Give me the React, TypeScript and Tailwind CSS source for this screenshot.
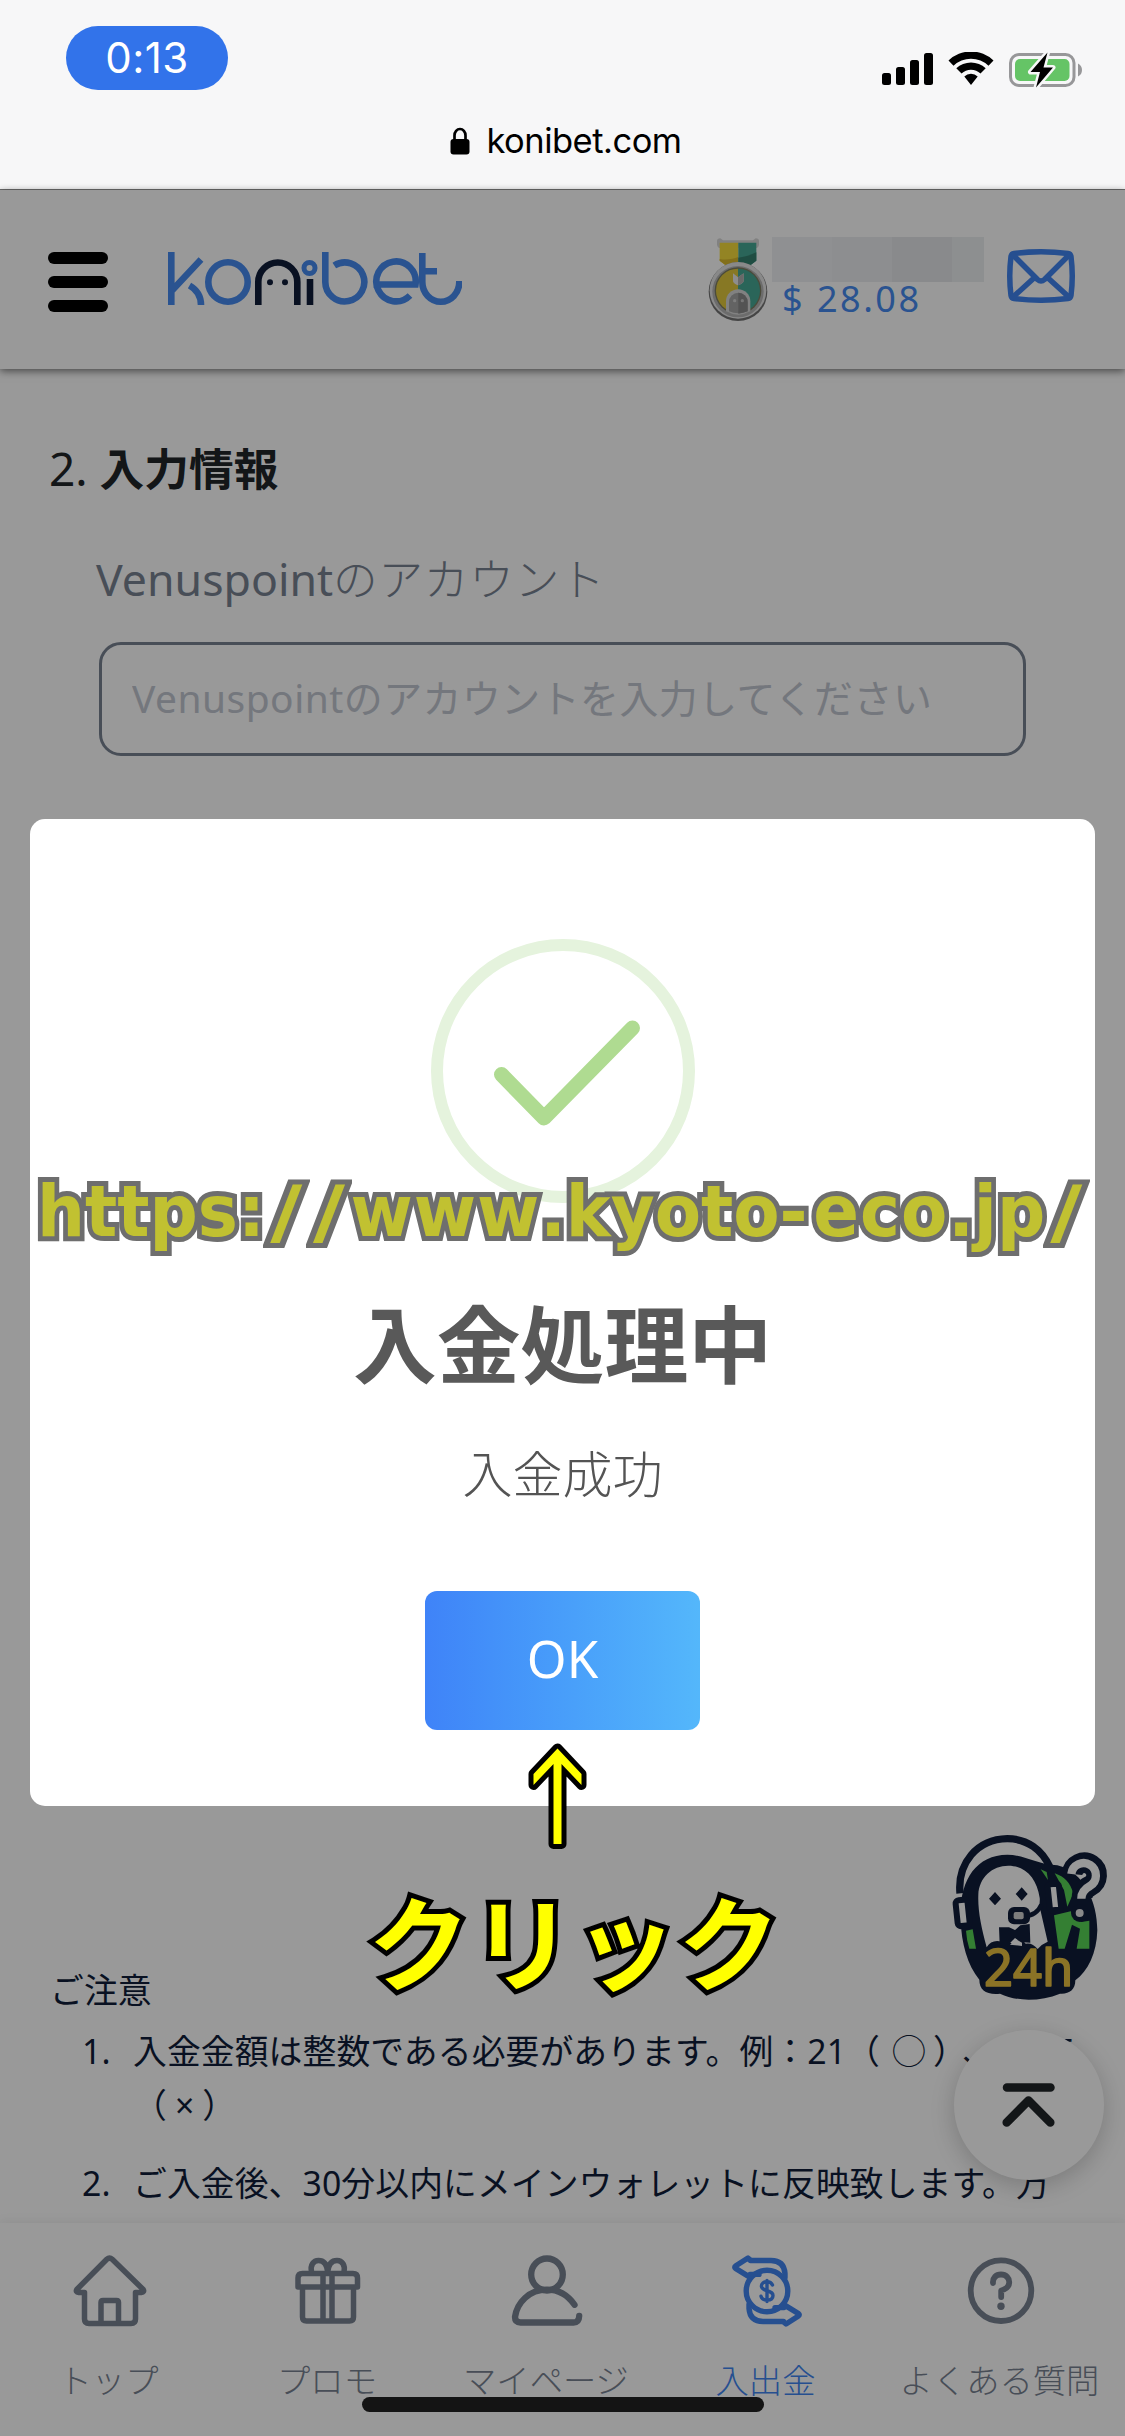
// App.tsx
import React from 'react';

const Logo: React.FC = () => (
  <svg width="294" height="53" viewBox="168 252 294 53" fill="none" stroke="#468bf0" strokeWidth="6.6">
    <path d="M171.3 252v53M172 290.5l29-31M189.5 285.5c7 4 11.500 10 11.500 19.500" />
    <circle cx="228" cy="282" r="19.700" />
    <path d="M258.300 305v-23a19.500 19.500 0 0 1 39 0v23M310 279v26" stroke="#101d3a" />
    <circle cx="270" cy="282.300" r="3" fill="#101d3a" stroke="none" />
    <circle cx="285" cy="282.300" r="3" fill="#101d3a" stroke="none" />
    <circle cx="309.500" cy="268" r="5.500" strokeWidth="5" />
    <path d="M325.300 252v30a19.500 19.500 0 1 0 9-16.500" />
    <path d="M373.500 284.500h42a19.700 20 0 1 0-5.500 11" />
    <path d="M422.300 253v29a18.500 19.700 0 0 0 37 0v-1M422 271.300h15" />
  </svg>
);

const Medal: React.FC = () => (
  <svg width="60" height="85" viewBox="85 80 180 255">
    <path d="M112 92q0-8 10-8l8 6h90l8-6q10 0 10 8v12q-3 12-10 8H122q-7 4-10-8z" fill="#d8d8d8" />
    <path d="M120 97h56v66h-40l-16-12z" fill="#f5dc3c" />
    <path d="M120 146c22 4 40 0 56-6v23h-40l-16-12z" fill="#d9b92e" />
    <path d="M176 97h54v54l-16 12h-38z" fill="#46a894" />
    <path d="M176 142c20-3 38-8 54-16v25l-16 12h-38z" fill="#34816f" />
    <circle cx="175" cy="244" r="88" fill="#747474" />
    <circle cx="175" cy="240" r="85" fill="#e4e4e4" />
    <circle cx="175" cy="244" r="77" fill="#b4b4b4" />
    <circle cx="175" cy="241" r="70" fill="#7d7d62" />
    <path d="M175 175a66 66 0 0 0 0 132z" fill="#e2c93c" />
    <path d="M175 175a66 66 0 0 1 0 132z" fill="#46a894" />
    <path d="M160 189l15 12 17-12v24q-3 8-17 12-13-4-15-12z" fill="#ececec" />
    <path d="M175 201l17-12v24q-3 8-17 12z" fill="#b0b0b0" />
    <path d="M139 303v-30a36 36 0 0 1 73 0v30q-37 20-73 0z" fill="#d8d8d8" />
    <path d="M148 303v-28a28 28 0 0 1 56 0v28q-28 12-56 0z" fill="#a5a5a5" />
    <path d="M176 247a28 28 0 0 1 28 28v28q-14 6-28 7z" fill="#8a8a8a" />
    <circle cx="165" cy="271" r="5" fill="#d0d0d0" />
    <circle cx="188" cy="271" r="5" fill="#c4c4c4" />
  </svg>
);

const Envelope: React.FC = () => (
  <svg width="68" height="54" viewBox="1007 249 68 54" fill="none" stroke="#4084f0" strokeWidth="5.5" strokeLinejoin="round">
    <path d="M1014 253.500q27-3.500 54 0 2.500.300 3 3 2.500 19.500 0 39-.500 2.700-3 3-27 3.500-54 0-2.500-.300-3-3-2.500-19.500 0-39 .500-2.700 3-3z" />
    <path d="M1012 254l25.500 25.500q3.500 3 7 0L1070 254M1012 298l22-20M1070 298l-22-20" />
  </svg>
);

const Mascot: React.FC = () => (
  <svg width="160" height="170" viewBox="90 69 480 510">
    <path d="M120 250C112 160 170 88 262 86c60 0 105 34 128 86" fill="none" stroke="#101d3a" strokeWidth="22" />
    <path d="M122 330C116 215 165 135 262 134c50 0 90 30 150 32 80 20 120 110 120 195-2 70-28 122-66 150 0 30-20 42-46 40-60 24-130 24-180 0-40 4-62-10-62-42-36-44-54-110-56-179z" fill="#101d3a" />
    <path d="M200 412c-16-60-27-110-25-158 2-52 42-87 90-87 54 0 86 42 94 96 2 14-4 26 2 36l22 96q-16 6-30 22-16-20-36-16-18-22-40 0-12-8-32-6-30-8-45 17z" fill="#fff" />
    <path d="M237 352l30 0 18 8 16-14 28-4 2 56-30-2-16-12-18 18h-28z" fill="#101d3a" />
    <path d="M270 404l18-16 18 10v10z" fill="#fff" />
    <path d="M312 318q38 0 52-34" fill="none" stroke="#101d3a" strokeWidth="13" />
    <rect x="264" y="291" width="66" height="52" rx="18" fill="#101d3a" />
    <rect x="281" y="306" width="30" height="22" rx="6" fill="#d0d0d0" />
    <path d="M225 246l18 20-18 20-18-20zM305 232l18 20-18 20-18-20z" fill="#101d3a" />
    <path d="M138 362l20-4 10 58h-20q-8-24-10-54zM362 178l18 8 4 24zM404 190c30 10 46 28 56 60l-18 40-10-50zM402 316l50-12 32 32 24-4v84h-38l10-60-24-12-22 72h-18z" fill="#58d455" />
    <rect x="110" y="270" width="36" height="78" rx="10" transform="rotate(-6 125 310)" fill="#fff" stroke="#101d3a" strokeWidth="18" />
    <rect x="386" y="222" width="34" height="78" rx="8" transform="rotate(-6 403 260)" fill="#fff" stroke="#101d3a" strokeWidth="18" />
    <path d="M456 192a37 37 0 1 1 54 36q-24 12-24 36" fill="none" stroke="#101d3a" strokeWidth="62" />
    <path d="M454 192a37 37 0 1 1 56 36q-26 14-26 38" fill="none" stroke="#fff" strokeWidth="25" />
    <circle cx="480" cy="309" r="27" fill="#101d3a" />
    <circle cx="479" cy="309" r="12" fill="#e5e5e5" />
    <text x="192" y="529" fontSize="152" textLength="268" fontFamily="Noto Sans, sans-serif" fill="#e8c040" stroke="#e8c040" strokeWidth="5" strokeLinejoin="round">24h</text>
  </svg>
);

const HomeIcon: React.FC = () => (
  <svg width="80" height="80" viewBox="69.500 2251 80 80" fill="none" stroke="#788292" strokeWidth="5.500" strokeLinejoin="round" strokeLinecap="round">
    <path d="M106.300 2259.300q2.700-2.500 5.400 0l31 30.200q1.500 2.500-2 3h-5.700v26.500q0 4.500-4.500 4.500h-42q-4.500 0-4.500-4.500v-26.500h-5.700q-3.500-.500-2-3z" />
    <path d="M100.500 2322v-19.500q0-2 2-2h13.500q2 0 2 2v19.500" />
  </svg>
);

const GiftIcon: React.FC = () => (
  <svg width="80" height="80" viewBox="287.500 2251 80 80" fill="none" stroke="#788292" strokeWidth="5.500" strokeLinejoin="round" strokeLinecap="round">
    <path d="M297.500 2287v-9q0-4.500 4.500-4.500h50.500q4.500 0 4.500 4.500v9zM302 2288v29q0 4 4 4h43q4 0 4-4v-29M322.500 2274v46M331.500 2274v46" />
    <path d="M311 2272c-1.500-7 2-11.500 7-11.500 5.500 0 8.500 4 9.200 11.500.700-7.500 3.700-11.500 9.300-11.500 5 0 8.500 4.500 7 11.500" />
  </svg>
);

const PersonIcon: React.FC = () => (
  <svg width="80" height="80" viewBox="507 2251 80 80" fill="none" stroke="#788292" strokeWidth="6.300" strokeLinecap="round" strokeLinejoin="round">
    <ellipse cx="547" cy="2274.500" rx="15.800" ry="16" />
    <path d="M574.500 2304.800C568 2295.500 558 2289.700 547 2289.700c-18 0-30 13-32 27.300q0 5.500 5.500 5.500h53q5.500 0 5.700-6.500" />
  </svg>
);

const CoinIcon: React.FC = () => (
  <svg width="80" height="80" viewBox="726 2251 80 80" fill="none" stroke="#4084f0" strokeWidth="5.400" strokeLinejoin="round" strokeLinecap="round">
    <circle cx="766" cy="2291" r="20.800" />
    <path d="M784 2277.500v-4q-1-13-14-13h-20.500v-.500l-2.500-2-12.500 8q-1.500 1.200 0 2.400l13 8 1.500-2h9" />
    <path d="M748 2304.500v4q1 13 14 13h20.500v.500l2.500 2 12.500-8q1.500-1.200 0-2.400l-13-8-1.500 2h-9" />
    <path d="M771.500 2285c-1-2.300-3-3.200-5.600-3.200-3.400 0-5.500 1.800-5.500 4.300 0 6 11.600 3.300 11.600 9.300 0 2.900-2.400 4.600-6 4.600-3 0-5.200-1.200-6-3.800M766 2280.500v21" strokeWidth="3.400" />
  </svg>
);

const HelpIcon: React.FC = () => (
  <svg width="80" height="80" viewBox="960 2251 80 80" fill="none" stroke="#788292" strokeWidth="5.800" strokeLinecap="round" strokeLinejoin="round">
    <circle cx="1000" cy="2290.700" r="30.300" />
    <path d="M992 2283c-.5-5 3-8.500 8-8.500s8.500 3.500 8.200 8.200c-.4 5-4.200 6.800-8 7.800v6.500" />
    <circle cx="1000" cy="2306.200" r="3.700" fill="#788292" stroke="none" />
  </svg>
);

const StatusBar: React.FC = () => (
  <div className="h-[190px] bg-[#f7f7f8] border-b border-[#6c6c6c] font-[Inter,sans-serif]">
    <div className="flex items-start justify-between pt-[26px] pl-[66px] pr-[42px]">
      <div className="w-[162px] h-16 rounded-full bg-[#3273ea] text-white text-[42px] tracking-[0.5px] leading-[64px] text-center">0:13</div>
      <div className="flex mt-[26px]">
        <svg width="51" height="34" viewBox="0 0 51 34">
          <rect x="0" y="21" width="9" height="12" rx="2.500" />
          <rect x="14" y="15" width="9" height="18" rx="2.500" />
          <rect x="28" y="8" width="9" height="25" rx="2.500" />
          <rect x="42" y="1" width="9" height="32" rx="2.500" />
        </svg>
        <svg className="ml-[15px]" width="46" height="34" viewBox="948 52 46 34">
          <path d="M948.500 60.500a32.500 32.500 0 0 1 45 0l-5 5.200a25.200 25.200 0 0 0-35 0zM956.300 68.300a21.200 21.200 0 0 1 29.400 0l-5.200 5.300a13.800 13.800 0 0 0-19 0zM964.300 76.500a9.800 9.800 0 0 1 13.400 0l-6.700 8.500z" />
        </svg>
        <svg className="ml-[15px]" width="74" height="36" viewBox="1009 51 74 36">
          <rect x="1010.500" y="53.500" width="63.500" height="31" rx="8.500" fill="none" stroke="#979799" strokeWidth="3" />
          <rect x="1015" y="58" width="54.500" height="22" rx="5" fill="#65c466" />
          <path d="M1078 62.500q4 2 4 6.500t-4 6.500z" fill="#979799" />
          <path d="M1047.500 51.500l-17 19.500h9.500l-4 15.500 17-20h-9.500z" fill="#000" stroke="#f7f7f8" strokeWidth="5" paintOrder="stroke" strokeLinejoin="round" />
        </svg>
      </div>
    </div>
    <div className="flex items-center justify-center h-[50px] mt-[26px] pl-[7px]">
      <svg width="20" height="28" viewBox="0 0 20 28">
        <path d="M4.500 13V8.500a5.500 6.500 0 0 1 11 0V13" fill="none" stroke="#000" strokeWidth="2.700" />
        <rect x="0.500" y="12" width="19" height="15.500" rx="3" />
      </svg>
      <span className="ml-[16px] text-[34.500px] leading-[50px] text-black tracking-[-0.5px]">konibet.com</span>
    </div>
  </div>
);

const Header: React.FC = () => (
  <header className="flex items-start h-[179px] pt-[47px] pl-12 bg-white shadow-[0_2px_8px_rgba(0,0,0,0.55)]">
    <div className="flex flex-col gap-3 mt-[15px] w-[60px]">
      <span className="h-3 rounded-full bg-black" />
      <span className="h-3 rounded-full bg-black" />
      <span className="h-3 rounded-full bg-black" />
    </div>
    <div className="mt-[15px] ml-[60px]">
      <Logo />
    </div>
    <div className="ml-[246px]">
      <Medal />
    </div>
    <div className="ml-1 w-[212px]">
      <div className="flex h-[45px]">
        <span className="w-[60px] bg-[#eff0f3]" />
        <span className="w-[60px] bg-[#ebedf0]" />
        <span className="w-[60px] bg-[#e5e7ea]" />
        <span className="w-[32px] bg-[#eceef1]" />
      </div>
      <p className="pl-[10px] pt-px text-[36px] leading-8 tracking-[2.5px] text-[#468bf0] whitespace-nowrap">$ 28.08</p>
    </div>
    <div className="ml-[23px] mt-3">
      <Envelope />
    </div>
  </header>
);

const tabs = [
  { label: 'トップ', icon: <HomeIcon />, className: 'w-[219px] text-[#788292]' },
  { label: 'プロモ', icon: <GiftIcon />, className: 'w-[218px] text-[#788292]' },
  { label: 'マイページ', icon: <PersonIcon />, className: 'w-[220px] text-[#788292]' },
  { label: '入出金', icon: <CoinIcon />, className: 'w-[219px] text-[#4084f0]' },
  { label: 'よくある質問', icon: <HelpIcon />, className: 'w-[249px] text-[#788292]' },
];

const App: React.FC = () => {
  return (
    <div className="relative w-[1125px] h-[2436px] overflow-hidden bg-white font-['Noto_Sans','Noto_Sans_CJK_JP',sans-serif]">
      <StatusBar />
      <Header />

      <main className="text-[#101d3a]">
        <h2 className="mt-[69px] ml-[49px] text-[44.700px] leading-[60px] text-[#212529]">
          <span className="text-[46px]">2. </span>
          <span className="font-bold">入力情報</span>
        </h2>
        <label htmlFor="account" className="block mt-[50px] ml-[96px] text-[44.600px] leading-[60px] text-[#788292]">
          Venuspoint<span className="font-light tracking-[0.8px]">のアカウント</span>
        </label>
        <input
          id="account"
          type="text"
          placeholder="Venuspointのアカウントを入力してください"
          className="block mt-[33px] ml-[99px] w-[927px] h-[114px] pl-[30px] pb-[3px] rounded-[22px] border-[3px] border-[#788292] text-[38.900px] tracking-[0.5px] placeholder:text-[#c1c6d0]"
        />

        <div className="mt-[1207px] text-[33.800px] tracking-[0.1px] leading-[54px]">
          <p className="ml-[50px]">ご注意</p>
          <ol className="mt-[7px] ml-[82px] flex flex-col gap-6 whitespace-nowrap">
            <li className="flex">
              <span className="w-[51px]">1.</span>
              <span>
                入金金額は整数である必要があります。例：21<span className="mr-3">（</span>
                <span className="mr-[7px]">◯</span>）<span className="mx-3">、</span>21.5
                <br />
                （<span className="mx-2">×</span>）
              </span>
            </li>
            <li className="flex">
              <span className="w-[51px]">2.</span>
              <span>
                ご入金後、30分以内にメインウォレットに反映致します。万
                <span className="block pt-[3px]">が一、反映されない場合はお手数ですがサポートまで</span>
              </span>
            </li>
          </ol>
        </div>
      </main>

      <div className="absolute left-[950px] top-[1833px]">
        <Mascot />
      </div>
      <button className="absolute left-[954px] top-[2030px] w-[150px] h-[150px] rounded-full bg-white shadow-[0_6px_24px_rgba(0,0,0,0.2)] flex items-center justify-center">
        <svg width="54" height="46" viewBox="1002 2082 54 46" fill="none" stroke="#212529" strokeWidth="8.500" strokeLinecap="round" strokeLinejoin="round">
          <path d="M1007 2087.500h43.500M1006.700 2122.500l21.800-22 21.800 22" />
        </svg>
      </button>

      <nav className="absolute inset-x-0 bottom-0 h-[213px] flex bg-white shadow-[0_-2px_10px_rgba(0,0,0,0.06)]">
        {tabs.map((tab) => (
          <div key={tab.label} className={`flex flex-col items-center pt-7 ${tab.className}`}>
            {tab.icon}
            <span className="mt-[29px] pr-[2px] text-[33.300px] leading-10 font-light whitespace-nowrap">{tab.label}</span>
          </div>
        ))}
      </nav>

      {/* Dialog */}
      <div className="absolute inset-x-0 top-[190px] bottom-0 bg-black/40 pt-[629px] px-[30px]">
        <div className="flex flex-col items-center h-[987px] pt-[120px] rounded-[15px] bg-white">
          <svg width="264" height="264" viewBox="431 939 264 264" fill="none">
            <circle cx="563" cy="1071" r="126" stroke="#e5f3dd" strokeWidth="12" />
            <path d="M501.500 1074.500l42.500 43.500 88.500-90" stroke="#afdb91" strokeWidth="15" strokeLinecap="round" strokeLinejoin="round" />
          </svg>
          <h1 className="mt-[92px] text-[83.800px] leading-[100px] font-bold text-[#595959]">入金処理中</h1>
          <p className="mt-[49px] text-[50px] leading-[60px] font-light text-[#545454]">入金成功</p>
          <button className="mt-[87px] pb-[5px] w-[275px] h-[139px] rounded-[12px] bg-gradient-to-r from-[#3f83f8] to-[#54b7fb] text-white text-[51px]">
            OK
          </button>
        </div>
      </div>

      {/* Notes placed over the screen */}
      <p className="absolute left-[37px] top-[1162px] origin-left scale-x-[0.95] text-[71px] leading-[100px] font-bold font-['DejaVu_Sans',sans-serif] text-[#c1c131] [-webkit-text-stroke:10px_#6e6e6e] [paint-order:stroke_fill] whitespace-nowrap">
        https:
        <span className="inline-block w-[45px] text-center scale-x-[1.3]">/</span>
        <span className="inline-block w-[45px] text-center scale-x-[1.3]">/</span>
        <span className="tracking-[1px]">www</span>.kyoto<span className="tracking-[6px]">-</span>
        <span className="tracking-[1px]">eco</span>.jp
        <span className="inline-block w-[45px] text-center scale-x-[1.3]">/</span>
      </p>
      <svg className="absolute left-[527px] top-[1740px]" width="62" height="112" viewBox="527 1740 62 112">
        <path
          d="M557.500 1748.500l24 25.500v11l-20-21v80h-8v-80l-20 21v-11z"
          fill="#ffff00"
          stroke="#000"
          strokeWidth="10"
          strokeLinejoin="round"
          paintOrder="stroke"
        />
      </svg>
      <p className="absolute left-[368px] top-[1884px] text-[102px] leading-[120px] tracking-[1.3px] font-bold text-[#ffff00] [-webkit-text-stroke:10px_#000] [paint-order:stroke_fill] whitespace-nowrap">
        クリック
      </p>

      <div className="absolute left-[362px] top-[2397px] w-[402px] h-[15px] rounded-full bg-[#141414]" />
    </div>
  );
};

export default App;
